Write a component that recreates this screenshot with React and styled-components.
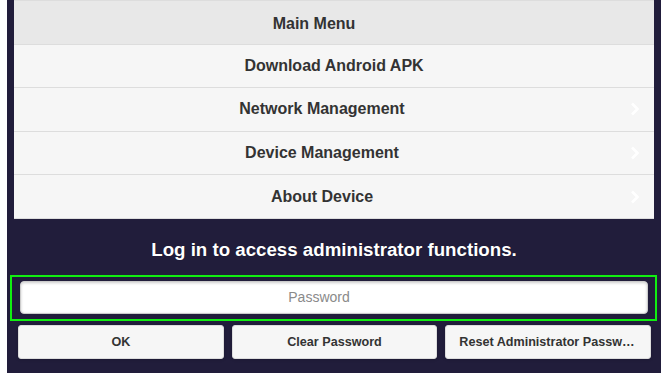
import React from 'react';
import styled, { createGlobalStyle } from 'styled-components';

const Global = createGlobalStyle`
body {
  margin: 0;
  background: #ffffff;
  font-family: "Liberation Sans", Arial, sans-serif;
}
`

const Page = styled.div`
margin: 0 4px 0 7px;
height: 373px;
background: #211d3b;
display: flex;
flex-direction: column;
`

const List = styled.ul`
list-style: none;
margin: 0 7px;
padding: 0;
border-top: 1px solid #dddddd;
`

const Row = styled.li`
height: 43.6px;
border-bottom: 1px solid #dddddd;
background: ${p => (p.header ? '#e8e8e8' : '#f6f6f6')};
display: flex;
align-items: center;
justify-content: center;
position: relative;
padding-right: ${p => p.pad}px;
padding-top: ${p => (p.header ? 4 : 0)}px;
box-sizing: border-box;
font-size: 16px;
font-weight: bold;
color: #333333;
`

const Chevron = styled.svg`
position: absolute;
right: 14px;
top: 50%;
margin-top: -7px;
`

const Title = styled.h2`
margin: 0;
padding: 20px 0 0;
height: 36px;
text-align: center;
color: #ffffff;
font-size: 18.7px;
font-weight: bold;
text-shadow: 0 0 1px rgba(0, 0, 0, 0.4);
`

const Focus = styled.div`
margin: 0 4px 0 3px;
border: 2px solid #11ee11;
padding: 4px 7px 5px 8px;
`

const Input = styled.input`
display: block;
box-sizing: border-box;
width: 100%;
height: 33px;
border: 1px solid #cccccc;
border-radius: 4px;
background: #ffffff;
box-shadow: inset 0 1px 3px rgba(0, 0, 0, 0.2);
text-align: center;
padding: 0 30px 0 0;
font-family: "Liberation Sans", Arial, sans-serif;
font-size: 14px;
color: #333333;
outline: none;
&::placeholder {
  color: #8a8a8a;
}
`

const Buttons = styled.div`
display: grid;
grid-template-columns: 1fr 1fr 1fr;
gap: 8px;
padding: 4px 10px 0 11px;
`

const Button = styled.button`
height: 34px;
border: 1px solid #dddddd;
border-radius: 3px;
background: #f6f6f6;
box-shadow: 0 1px 3px rgba(0, 0, 0, 0.15);
font-family: "Liberation Sans", Arial, sans-serif;
font-size: 12.6px;
font-weight: bold;
color: #333333;
white-space: nowrap;
overflow: hidden;
text-overflow: ellipsis;
padding: 0 13px;
`

const items = [
  { label: 'Main Menu', header: true, pad: 40 },
  { label: 'Download Android APK', pad: 0 },
  { label: 'Network Management', arrow: true, pad: 24 },
  { label: 'Device Management', arrow: true, pad: 24 },
  { label: 'About Device', arrow: true, pad: 24 },
];

export default function App() {
  return (
    <>
      <Global />
      <Page>
        <List>
          {items.map(it => (
            <Row key={it.label} header={it.header ? 1 : 0} pad={it.pad}>
              {it.label}
              {it.arrow && (
                <Chevron width="10" height="14" viewBox="0 0 10 14">
                  <path d="M2 1.5 L7.5 7 L2 12.5" fill="none" stroke="#ffffff" strokeWidth="2.6" />
                </Chevron>
              )}
            </Row>
          ))}
        </List>
        <Title>Log in to access administrator functions.</Title>
        <Focus>
          <Input type="password" placeholder="Password" />
        </Focus>
        <Buttons>
          <Button>OK</Button>
          <Button>Clear Password</Button>
          <Button>Reset Administrator Password</Button>
        </Buttons>
      </Page>
    </>
  );
}
